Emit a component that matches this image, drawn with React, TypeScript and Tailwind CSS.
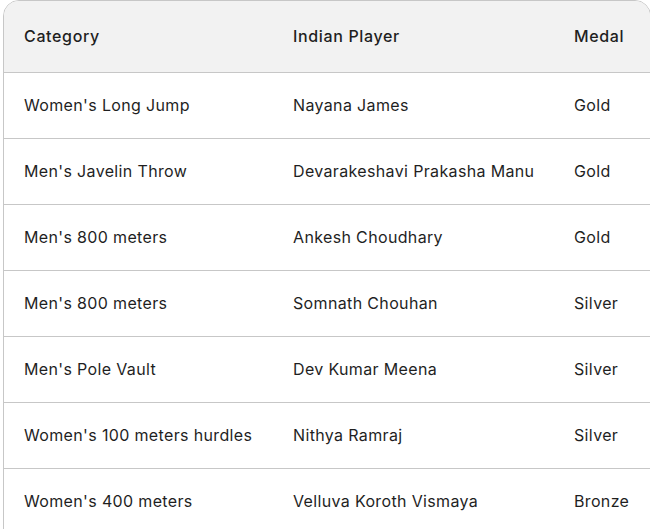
import React from "react";

const rows: [string, string, string][] = [
  ["Women's Long Jump", "Nayana James", "Gold"],
  ["Men's Javelin Throw", "Devarakeshavi Prakasha Manu", "Gold"],
  ["Men's 800 meters", "Ankesh Choudhary", "Gold"],
  ["Men's 800 meters", "Somnath Chouhan", "Silver"],
  ["Men's Pole Vault", "Dev Kumar Meena", "Silver"],
  ["Women's 100 meters hurdles", "Nithya Ramraj", "Silver"],
  ["Women's 400 meters", "Velluva Koroth Vismaya", "Bronze"],
];

export default function App() {
  return (
    <div className="w-[650px] h-[529px] overflow-hidden bg-white" style={{ fontFamily: "Inter, 'Noto Sans', sans-serif" }}>
      <div className="ml-[3px] w-[648px] border border-[#c7c7c7] rounded-t-[16px] overflow-hidden">
        <table className="w-full border-collapse table-fixed text-[16px] text-[#1f1f1f] tracking-[0.35px]">
          <colgroup>
            <col className="w-[269px]" />
            <col className="w-[281px]" />
            <col />
          </colgroup>
          <thead>
            <tr className="bg-[#f2f2f2] h-[71px] border-b border-[#c7c7c7]">
              <th className="text-left font-medium pl-5 tracking-[0.65px]">Category</th>
              <th className="text-left font-medium pl-5 tracking-[0.65px]">Indian Player</th>
              <th className="text-left font-medium pl-5 tracking-[0.65px]">Medal</th>
            </tr>
          </thead>
          <tbody>
            {rows.map((r, i) => (
              <tr key={i} className="h-[66px] border-b border-[#c7c7c7]">
                <td className="pl-5">{r[0]}</td>
                <td className="pl-5">{r[1]}</td>
                <td className="pl-5">{r[2]}</td>
              </tr>
            ))}
          </tbody>
        </table>
      </div>
    </div>
  );
}
